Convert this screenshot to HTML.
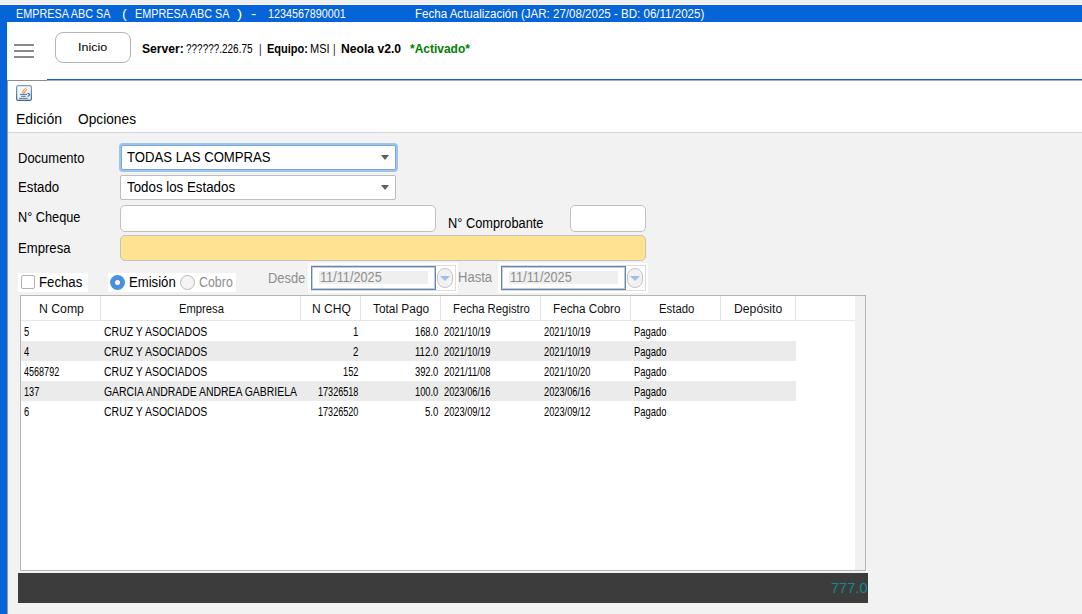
<!DOCTYPE html>
<html lang="es"><head><meta charset="utf-8"><title>Neola</title>
<style>
*{box-sizing:border-box}
html,body{margin:0;padding:0}
body{width:1082px;height:614px;position:relative;overflow:hidden;background:#f2f2f2;font-family:"Liberation Sans",Arial,sans-serif}
.a{position:absolute}
.t{position:absolute;white-space:pre;font-family:"Liberation Sans",Arial,sans-serif}

</style></head>
<body>
<!-- window chrome -->
<div class="a" style="left:0;top:0;width:1082px;height:4px;background:#f0f0f0"></div>
<div class="a" style="left:0;top:4px;width:1082px;height:1px;background:#fbf8f2"></div>
<div class="a" style="left:0;top:5px;width:1082px;height:17px;background:#0464d8"></div>
<div class="a" style="left:0;top:5px;width:7px;height:609px;background:#0464d8"></div>
<!-- top white bar -->
<div class="a" style="left:7px;top:22px;width:1075px;height:57px;background:#fff"></div>
<div class="a" style="left:7px;top:79px;width:1075px;height:1px;background:#fff"></div>
<div class="a" style="left:47px;top:79px;width:1035px;height:1px;background:#0a62d8"></div>
<div class="a" style="left:7px;top:80px;width:40px;height:1px;background:#8c8c8c"></div>
<div class="a" style="left:47px;top:80px;width:1035px;height:1px;background:#b4ada6"></div>
<!-- hamburger -->
<div class="a" style="left:14px;top:44px;width:20px;height:2px;background:#8a8a8a"></div>
<div class="a" style="left:14px;top:50px;width:20px;height:2px;background:#8a8a8a"></div>
<div class="a" style="left:14px;top:56px;width:20px;height:2px;background:#8a8a8a"></div>
<!-- Inicio button -->
<div class="a" style="left:55px;top:32px;width:76px;height:31px;border:1px solid #b4b4b4;border-radius:8px;background:#fff"></div>
<!-- menu area -->
<div class="a" style="left:8px;top:81px;width:1074px;height:51px;background:#fff"></div>
<div class="a" style="left:7px;top:81px;width:1px;height:533px;background:#9c9a98"></div>
<div class="a" style="left:8px;top:132px;width:1074px;height:1px;background:#d4d4d4"></div>
<!-- java icon -->
<svg class="a" style="left:16px;top:85px" width="16" height="16" viewBox="0 0 16 16">
<defs><linearGradient id="jg" x1="0" y1="0" x2="0" y2="1"><stop offset="0" stop-color="#fbfbfb"/><stop offset="1" stop-color="#e9ebee"/></linearGradient>
<linearGradient id="jb" x1="0" y1="0" x2="0" y2="1"><stop offset="0" stop-color="#7d9fc1"/><stop offset="1" stop-color="#3f6790"/></linearGradient></defs>
<rect x="0.6" y="0.6" width="14.8" height="14.8" rx="1.6" fill="url(#jg)" stroke="url(#jb)" stroke-width="1.2"/>
<path d="M7.3 8.5C5.5 6.3 8.3 4.7 9.7 3.1" stroke="#e8730f" stroke-width="1" fill="none" stroke-linecap="round"/>
<path d="M8.5 7.8C7.7 6.3 9.9 5.9 10.8 4.7" stroke="#e8730f" stroke-width="0.9" fill="none" stroke-linecap="round"/>
<path d="M4 9.4h7M5 11.3h4.8" stroke="#45709e" stroke-width="1" fill="none"/>
<path d="M3 13.4h8.8" stroke="#45709e" stroke-width="0.9" fill="none"/>
<path d="M11.4 8.4c2.6.2 3 2.2.2 3.1" stroke="#3f6d9b" stroke-width="1.2" fill="none"/>
</svg>
<!-- combos -->
<div class="a" style="left:119px;top:143px;width:279px;height:29px;border-radius:4px;background:#9fc4ee"></div>
<div class="a" style="left:121px;top:145px;width:275px;height:25px;border-radius:2px;background:#fff;border:1px solid #79a7da"></div>
<div class="a" style="left:381px;top:155px;width:0;height:0;border-left:4.8px solid transparent;border-right:4.8px solid transparent;border-top:5.3px solid #5e5e5e"></div>
<div class="a" style="left:120px;top:175px;width:276px;height:25px;border-radius:2px;background:#fff;border:1px solid #bdbdbd"></div>
<div class="a" style="left:381px;top:185px;width:0;height:0;border-left:4.8px solid transparent;border-right:4.8px solid transparent;border-top:5.3px solid #5e5e5e"></div>
<!-- text fields -->
<div class="a" style="left:120px;top:205px;width:316px;height:27px;border-radius:5px;background:#fff;border:1px solid #c0c0c0"></div>
<div class="a" style="left:570px;top:205px;width:76px;height:27px;border-radius:5px;background:#fff;border:1px solid #c0c0c0"></div>
<div class="a" style="left:120px;top:235px;width:526px;height:26px;border-radius:5px;background:#ffe392;border:1px solid #c4c2bc"></div>
<!-- fechas checkbox -->
<div class="a" style="left:18px;top:273px;width:70px;height:19px;background:#fff"></div>
<div class="a" style="left:21px;top:275px;width:14px;height:14px;border:1px solid #b2b2b2;border-radius:2px;background:#fff"></div>
<!-- radios -->
<div class="a" style="left:108px;top:273px;width:128px;height:19px;background:#fff"></div>
<div class="a" style="left:110px;top:275px;width:15px;height:15px;border-radius:50%;background:#4a90e2"></div>
<div class="a" style="left:115px;top:280px;width:5px;height:5px;border-radius:50%;background:#fff"></div>
<div class="a" style="left:180px;top:275px;width:15px;height:15px;border-radius:50%;background:#f4f4f4;border:1px solid #b9b9b9"></div>
<!-- date pickers -->
<div class="a" style="left:308px;top:263px;width:150px;height:30px;background:#fff"></div>
<div class="a" style="left:311px;top:265px;width:145px;height:26px;border:1px solid #dcdcdc;background:#fff"></div>
<div class="a" style="left:311px;top:266px;width:125px;height:24px;border:1px solid #6884a9;background:#fff;box-shadow:inset 0 0 0 1px #bccde4"></div>
<div class="a" style="left:319px;top:271px;width:109px;height:13px;background:#efefef"></div>
<div class="a" style="left:436.7px;top:267.5px;width:16.3px;height:20.5px;border:1px solid #c4c4c4;border-radius:8px;background:#f2f2f2"></div>
<div class="a" style="left:440.3px;top:276px;width:0;height:0;border-left:5px solid transparent;border-right:5px solid transparent;border-top:5px solid #a2c0e4"></div>
<div class="a" style="left:498px;top:263px;width:150px;height:30px;background:#fff"></div>
<div class="a" style="left:501px;top:265px;width:145px;height:26px;border:1px solid #dcdcdc;background:#fff"></div>
<div class="a" style="left:501px;top:266px;width:125px;height:24px;border:1px solid #6884a9;background:#fff;box-shadow:inset 0 0 0 1px #bccde4"></div>
<div class="a" style="left:509px;top:271px;width:109px;height:13px;background:#efefef"></div>
<div class="a" style="left:626.7px;top:267.5px;width:16.3px;height:20.5px;border:1px solid #c4c4c4;border-radius:8px;background:#f2f2f2"></div>
<div class="a" style="left:630.3px;top:276px;width:0;height:0;border-left:5px solid transparent;border-right:5px solid transparent;border-top:5px solid #a2c0e4"></div>
<!-- table -->
<div class="a" style="left:20px;top:295px;width:846px;height:276px;background:#fff;border:1px solid #b5b5b5"></div>
<div class="a" style="left:855px;top:296px;width:10px;height:274px;background:#f1f1f1"></div>
<div class="a" style="left:21px;top:320px;width:834px;height:1px;background:#e6e6e6"></div>
<div class="a" style="left:21px;top:341px;width:775px;height:20px;background:#ebebeb"></div>
<div class="a" style="left:21px;top:381px;width:775px;height:20px;background:#ebebeb"></div>
<div class="a" style="left:100px;top:296px;width:1px;height:24px;background:#e2e2e2"></div>
<div class="a" style="left:300px;top:296px;width:1px;height:24px;background:#e2e2e2"></div>
<div class="a" style="left:360px;top:296px;width:1px;height:24px;background:#e2e2e2"></div>
<div class="a" style="left:440px;top:296px;width:1px;height:24px;background:#e2e2e2"></div>
<div class="a" style="left:540px;top:296px;width:1px;height:24px;background:#e2e2e2"></div>
<div class="a" style="left:630px;top:296px;width:1px;height:24px;background:#e2e2e2"></div>
<div class="a" style="left:720px;top:296px;width:1px;height:24px;background:#e2e2e2"></div>
<div class="a" style="left:795px;top:296px;width:1px;height:24px;background:#e2e2e2"></div>
<!-- total bar -->
<div class="a" style="left:18px;top:573px;width:850px;height:30px;background:#3c3c3c"></div>

<span class="t" style="left:16.00px;transform-origin:0 0;top:7px;font-size:12.5px;line-height:14px;color:#fff;transform:scaleX(0.8654)">EMPRESA ABC SA</span>
<span class="t" style="left:121.80px;transform-origin:0 0;top:7px;font-size:12.5px;line-height:14px;color:#fff;transform:scaleX(1.1506)">(</span>
<span class="t" style="left:135.10px;transform-origin:0 0;top:7px;font-size:12.5px;line-height:14px;color:#fff;transform:scaleX(0.8654)">EMPRESA ABC SA</span>
<span class="t" style="left:237.40px;transform-origin:0 0;top:7px;font-size:12.5px;line-height:14px;color:#fff;transform:scaleX(1.2464)">)</span>
<span class="t" style="left:251.20px;transform-origin:0 0;top:7px;font-size:12.5px;line-height:14px;color:#fff;transform:scaleX(1.2944)">-</span>
<span class="t" style="left:267.90px;transform-origin:0 0;top:7px;font-size:12.5px;line-height:14px;color:#fff;transform:scaleX(0.8598)">1234567890001</span>
<span class="t" style="left:415.00px;transform-origin:0 0;top:7px;font-size:12.5px;line-height:14px;color:#fff;transform:scaleX(0.9238)">Fecha Actualización (JAR: 27/08/2025 - BD: 06/11/2025)</span>
<span class="t" style="left:141.60px;transform-origin:0 0;top:42px;font-size:12.5px;line-height:14px;font-weight:700;color:#000;transform:scaleX(0.9723)">Server:</span>
<span class="t" style="left:186.40px;transform-origin:0 0;top:42px;font-size:12.5px;line-height:14px;color:#000;transform:scaleX(0.7972)">??????.226.75</span>
<span class="t" style="left:258.70px;transform-origin:0 0;top:42px;font-size:12.5px;line-height:14px;color:#222;transform:scaleX(0.8000)">|</span>
<span class="t" style="left:266.90px;transform-origin:0 0;top:42px;font-size:12.5px;line-height:14px;font-weight:700;color:#000;transform:scaleX(0.8814)">Equipo:</span>
<span class="t" style="left:310.00px;transform-origin:0 0;top:42px;font-size:12.5px;line-height:14px;color:#000;transform:scaleX(0.8815)">MSI</span>
<span class="t" style="left:332.70px;transform-origin:0 0;top:42px;font-size:12.5px;line-height:14px;color:#222;transform:scaleX(0.8000)">|</span>
<span class="t" style="left:341.40px;transform-origin:0 0;top:42px;font-size:12.5px;line-height:14px;font-weight:700;color:#000;transform:scaleX(0.9718)">Neola v2.0</span>
<span class="t" style="left:409.70px;transform-origin:0 0;top:42px;font-size:12.5px;line-height:14px;font-weight:700;color:#008000;transform:scaleX(0.9579)">*Activado*</span>
<span class="t" style="left:78.30px;transform-origin:0 0;top:41px;font-size:11px;line-height:12px;color:#000;transform:scaleX(1.1406)">Inicio</span>
<span class="t" style="left:16.00px;transform-origin:0 0;top:111px;font-size:14.6px;line-height:16px;color:#000;transform:scaleX(0.9629)">Edición</span>
<span class="t" style="left:78.10px;transform-origin:0 0;top:111px;font-size:14.6px;line-height:16px;color:#000;transform:scaleX(0.9407)">Opciones</span>
<span class="t" style="left:17.80px;transform-origin:0 0;top:150px;font-size:14px;line-height:16px;color:#000;transform:scaleX(0.9275)">Documento</span>
<span class="t" style="left:17.80px;transform-origin:0 0;top:179px;font-size:14px;line-height:16px;color:#000;transform:scaleX(0.9451)">Estado</span>
<span class="t" style="left:17.70px;transform-origin:0 0;top:209px;font-size:14px;line-height:16px;color:#000;transform:scaleX(0.9091)">N° Cheque</span>
<span class="t" style="left:17.70px;transform-origin:0 0;top:240px;font-size:14px;line-height:16px;color:#000;transform:scaleX(0.9370)">Empresa</span>
<span class="t" style="left:447.70px;transform-origin:0 0;top:215px;font-size:14px;line-height:16px;color:#000;transform:scaleX(0.9144)">N° Comprobante</span>
<span class="t" style="left:126.60px;transform-origin:0 0;top:149px;font-size:14px;line-height:16px;color:#000;transform:scaleX(0.9385)">TODAS LAS COMPRAS</span>
<span class="t" style="left:126.60px;transform-origin:0 0;top:179px;font-size:14px;line-height:16px;color:#000;transform:scaleX(0.9514)">Todos los Estados</span>
<span class="t" style="left:38.70px;transform-origin:0 0;top:274px;font-size:14px;line-height:16px;color:#000;transform:scaleX(0.9429)">Fechas</span>
<span class="t" style="left:129.20px;transform-origin:0 0;top:274px;font-size:14px;line-height:16px;color:#000;transform:scaleX(0.9378)">Emisión</span>
<span class="t" style="left:199.10px;transform-origin:0 0;top:274px;font-size:14px;line-height:16px;color:#8e8e8e;transform:scaleX(0.8862)">Cobro</span>
<span class="t" style="left:267.60px;transform-origin:0 0;top:270px;font-size:14px;line-height:16px;color:#8e8e8e;transform:scaleX(0.9217)">Desde</span>
<span class="t" style="left:320.40px;transform-origin:0 0;top:269px;font-size:14px;line-height:16px;color:#8e8e8e;transform:scaleX(0.9074)">11/11/2025</span>
<span class="t" style="left:458.10px;transform-origin:0 0;top:269px;font-size:14px;line-height:16px;color:#8e8e8e;transform:scaleX(0.9323)">Hasta</span>
<span class="t" style="left:510.40px;transform-origin:0 0;top:269px;font-size:14px;line-height:16px;color:#8e8e8e;transform:scaleX(0.9074)">11/11/2025</span>
<span class="t" style="left:38.90px;transform-origin:0 0;top:302px;font-size:12px;line-height:14px;color:#111;transform:scaleX(1.0201)">N Comp</span>
<span class="t" style="left:179.10px;transform-origin:0 0;top:302px;font-size:12px;line-height:14px;color:#111;transform:scaleX(0.9348)">Empresa</span>
<span class="t" style="left:311.70px;transform-origin:0 0;top:302px;font-size:12px;line-height:14px;color:#111;transform:scaleX(1.0059)">N CHQ</span>
<span class="t" style="left:373.30px;transform-origin:0 0;top:302px;font-size:12px;line-height:14px;color:#111;transform:scaleX(0.9891)">Total Pago</span>
<span class="t" style="left:453.20px;transform-origin:0 0;top:302px;font-size:12px;line-height:14px;color:#111;transform:scaleX(0.9438)">Fecha Registro</span>
<span class="t" style="left:552.60px;transform-origin:0 0;top:302px;font-size:12px;line-height:14px;color:#111;transform:scaleX(0.9730)">Fecha Cobro</span>
<span class="t" style="left:658.90px;transform-origin:0 0;top:302px;font-size:12px;line-height:14px;color:#111;transform:scaleX(0.9449)">Estado</span>
<span class="t" style="left:734.40px;transform-origin:0 0;top:302px;font-size:12px;line-height:14px;color:#111;transform:scaleX(1.0174)">Depósito</span>
<span class="t" style="left:24.00px;transform-origin:0 0;top:324px;font-size:13.4px;line-height:15px;color:#000;transform:scaleX(0.6977)">5</span>
<span class="t" style="left:104.10px;transform-origin:0 0;top:324px;font-size:13.4px;line-height:15px;color:#000;transform:scaleX(0.7828)">CRUZ Y ASOCIADOS</span>
<span class="t" style="left:352.90px;transform-origin:0 0;top:324px;font-size:13.4px;line-height:15px;color:#000;transform:scaleX(0.7245)">1</span>
<span class="t" style="left:415.20px;transform-origin:0 0;top:324px;font-size:13.4px;line-height:15px;color:#000;transform:scaleX(0.6952)">168.0</span>
<span class="t" style="left:444.20px;transform-origin:0 0;top:324px;font-size:13.4px;line-height:15px;color:#000;transform:scaleX(0.6922)">2021/10/19</span>
<span class="t" style="left:543.90px;transform-origin:0 0;top:324px;font-size:13.4px;line-height:15px;color:#000;transform:scaleX(0.6922)">2021/10/19</span>
<span class="t" style="left:634.00px;transform-origin:0 0;top:324px;font-size:13.4px;line-height:15px;color:#000;transform:scaleX(0.7017)">Pagado</span>
<span class="t" style="left:24.00px;transform-origin:0 0;top:344px;font-size:13.4px;line-height:15px;color:#000;transform:scaleX(0.6977)">4</span>
<span class="t" style="left:104.10px;transform-origin:0 0;top:344px;font-size:13.4px;line-height:15px;color:#000;transform:scaleX(0.7828)">CRUZ Y ASOCIADOS</span>
<span class="t" style="left:352.90px;transform-origin:0 0;top:344px;font-size:13.4px;line-height:15px;color:#000;transform:scaleX(0.7245)">2</span>
<span class="t" style="left:415.20px;transform-origin:0 0;top:344px;font-size:13.4px;line-height:15px;color:#000;transform:scaleX(0.7166)">112.0</span>
<span class="t" style="left:444.20px;transform-origin:0 0;top:344px;font-size:13.4px;line-height:15px;color:#000;transform:scaleX(0.6922)">2021/10/19</span>
<span class="t" style="left:543.90px;transform-origin:0 0;top:344px;font-size:13.4px;line-height:15px;color:#000;transform:scaleX(0.6922)">2021/10/19</span>
<span class="t" style="left:634.00px;transform-origin:0 0;top:344px;font-size:13.4px;line-height:15px;color:#000;transform:scaleX(0.7017)">Pagado</span>
<span class="t" style="left:24.00px;transform-origin:0 0;top:364px;font-size:13.4px;line-height:15px;color:#000;transform:scaleX(0.6751)">4568792</span>
<span class="t" style="left:104.10px;transform-origin:0 0;top:364px;font-size:13.4px;line-height:15px;color:#000;transform:scaleX(0.7828)">CRUZ Y ASOCIADOS</span>
<span class="t" style="left:342.90px;transform-origin:0 0;top:364px;font-size:13.4px;line-height:15px;color:#000;transform:scaleX(0.6892)">152</span>
<span class="t" style="left:415.20px;transform-origin:0 0;top:364px;font-size:13.4px;line-height:15px;color:#000;transform:scaleX(0.6952)">392.0</span>
<span class="t" style="left:444.20px;transform-origin:0 0;top:364px;font-size:13.4px;line-height:15px;color:#000;transform:scaleX(0.7027)">2021/11/08</span>
<span class="t" style="left:543.90px;transform-origin:0 0;top:364px;font-size:13.4px;line-height:15px;color:#000;transform:scaleX(0.6922)">2021/10/20</span>
<span class="t" style="left:634.00px;transform-origin:0 0;top:364px;font-size:13.4px;line-height:15px;color:#000;transform:scaleX(0.7017)">Pagado</span>
<span class="t" style="left:24.00px;transform-origin:0 0;top:384px;font-size:13.4px;line-height:15px;color:#000;transform:scaleX(0.6803)">137</span>
<span class="t" style="left:104.10px;transform-origin:0 0;top:384px;font-size:13.4px;line-height:15px;color:#000;transform:scaleX(0.7784)">GARCIA ANDRADE ANDREA GABRIELA</span>
<span class="t" style="left:317.90px;transform-origin:0 0;top:384px;font-size:13.4px;line-height:15px;color:#000;transform:scaleX(0.6781)">17326518</span>
<span class="t" style="left:415.20px;transform-origin:0 0;top:384px;font-size:13.4px;line-height:15px;color:#000;transform:scaleX(0.6952)">100.0</span>
<span class="t" style="left:444.20px;transform-origin:0 0;top:384px;font-size:13.4px;line-height:15px;color:#000;transform:scaleX(0.6922)">2023/06/16</span>
<span class="t" style="left:543.90px;transform-origin:0 0;top:384px;font-size:13.4px;line-height:15px;color:#000;transform:scaleX(0.6922)">2023/06/16</span>
<span class="t" style="left:634.00px;transform-origin:0 0;top:384px;font-size:13.4px;line-height:15px;color:#000;transform:scaleX(0.7017)">Pagado</span>
<span class="t" style="left:24.00px;transform-origin:0 0;top:404px;font-size:13.4px;line-height:15px;color:#000;transform:scaleX(0.6977)">6</span>
<span class="t" style="left:104.10px;transform-origin:0 0;top:404px;font-size:13.4px;line-height:15px;color:#000;transform:scaleX(0.7828)">CRUZ Y ASOCIADOS</span>
<span class="t" style="left:317.90px;transform-origin:0 0;top:404px;font-size:13.4px;line-height:15px;color:#000;transform:scaleX(0.6781)">17326520</span>
<span class="t" style="left:425.20px;transform-origin:0 0;top:404px;font-size:13.4px;line-height:15px;color:#000;transform:scaleX(0.7141)">5.0</span>
<span class="t" style="left:444.20px;transform-origin:0 0;top:404px;font-size:13.4px;line-height:15px;color:#000;transform:scaleX(0.6922)">2023/09/12</span>
<span class="t" style="left:543.90px;transform-origin:0 0;top:404px;font-size:13.4px;line-height:15px;color:#000;transform:scaleX(0.6922)">2023/09/12</span>
<span class="t" style="left:634.00px;transform-origin:0 0;top:404px;font-size:13.4px;line-height:15px;color:#000;transform:scaleX(0.7017)">Pagado</span>
<span class="t" style="left:831.10px;transform-origin:0 0;top:580px;font-size:14px;line-height:16px;color:#148a8c;transform:scaleX(1.0415)">777.0</span>
</body></html>
